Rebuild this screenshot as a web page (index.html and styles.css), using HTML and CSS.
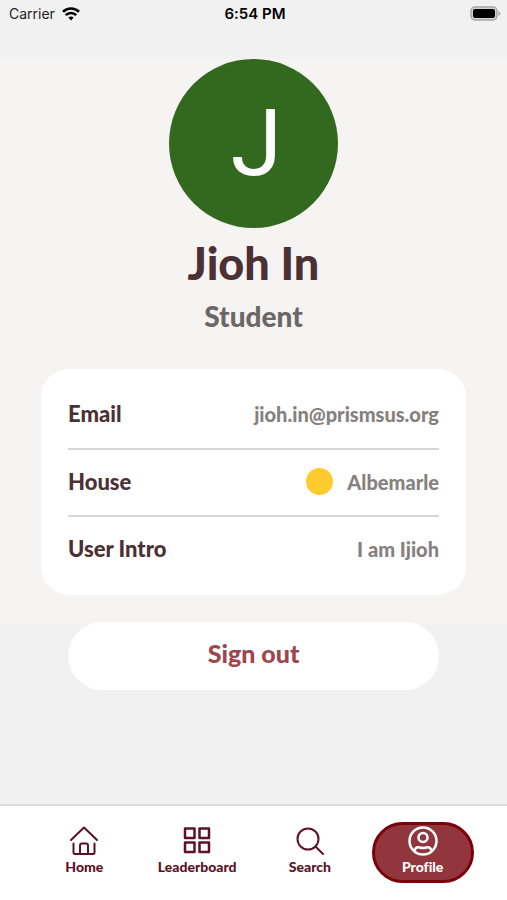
FILE: index.html
```html
<!DOCTYPE html>
<html lang="en">
<head>
    <meta charset="UTF-8">
    <meta name="viewport" content="width=device-width, initial-scale=1.0">
    <title>Profile</title>
    <link rel="stylesheet" href="styles.css">
</head>
<body>
    <!-- STATUS BAR -->
    <header class="status-bar">
        <div class="carrier">
            <span>Carrier</span>
            <svg width="18" height="14" viewBox="0 0 18 14" fill="none" stroke="#000" stroke-width="2.6">
                <path d="M1 4.700a11.500 11.500 0 0 1 16 0"/>
                <path d="M3.800 8.200a7.400 7.400 0 0 1 10.400 0"/>
                <path d="M9 13.500l-2.600-3a4 4 0 0 1 5.200 0z" fill="#000" stroke="none"/>
            </svg>
        </div>
        <time class="clock">6:54 PM</time>
        <svg class="battery" width="31" height="15" viewBox="0 0 31 15">
            <rect x="1" y="1" width="26" height="13" rx="4" fill="#d4d4d4" stroke="#a6a6a6" stroke-width="1.5"/>
            <rect x="3" y="3" width="22" height="9" rx="2" fill="#000"/>
            <path d="M28.5 5v5q2-1 2-2.500t-2-2.500z" fill="#a6a6a6"/>
        </svg>
    </header>

    <main>
        <section class="profile">
            <div class="avatar">J</div>
            <h1>Jioh In</h1>
            <p class="role">Student</p>

            <dl class="card">
                <div class="row">
                    <dt>Email</dt>
                    <dd>jioh.in@prismsus.org</dd>
                </div>
                <div class="row">
                    <dt>House</dt>
                    <dd><span class="house-color"></span>Albemarle</dd>
                </div>
                <div class="row">
                    <dt>User Intro</dt>
                    <dd>I am Ijioh</dd>
                </div>
            </dl>
        </section>
        <button type="button" class="sign-out">Sign out</button>
    </main>

    <!-- BOTTOM NAVIGATION -->
    <nav class="tabs">
        <a href="#home" class="tab">
            <svg width="30" height="30" viewBox="0 0 30 30">
                <path d="M2 14L15 1.500l13 12.500M4.500 17.500v9q0 1.500 1.500 1.500h18q1.500 0 1.500-1.500v-9M11 28v-8.500q0-2 2-2h4q2 0 2 2v8.500"/>
            </svg>
            <span>Home</span>
        </a>
        <a href="#leaderboard" class="tab">
            <svg width="30" height="30" viewBox="0 0 30 30" class="thick">
                <rect x="3" y="2.500" width="9.500" height="9.500"/>
                <rect x="17.500" y="2.500" width="9.500" height="9.500"/>
                <rect x="3" y="16.500" width="9.500" height="9.500"/>
                <rect x="17.500" y="16.500" width="9.500" height="9.500"/>
            </svg>
            <span>Leaderboard</span>
        </a>
        <a href="#search" class="tab">
            <svg width="30" height="30" viewBox="0 0 30 30">
                <circle cx="13" cy="13" r="10.500"/>
                <path d="M20.500 20.500l7.500 7.500"/>
            </svg>
            <span>Search</span>
        </a>
        <a href="#profile" class="tab active">
            <svg width="30" height="30" viewBox="0 0 30 30" class="thick">
                <circle cx="15" cy="15" r="13.500"/>
                <circle cx="15" cy="11.500" r="4.500"/>
                <path d="M6.500 24.500c1-3 3-3.500 5-3 2.500.7 4.500.7 7 0 2-.5 4 0 5 3"/>
            </svg>
            <span>Profile</span>
        </a>
    </nav>
</body>
</html>
```
FILE: styles.css
```css
* { margin: 0; padding: 0; box-sizing: border-box; }
body {
    font-family: Lato, sans-serif;
    font-weight: 900;
    font-variant-ligatures: none;
    background: #f1f1f1;
    color: #4b3034;
    min-height: 100vh;
    display: flex;
    flex-direction: column;
}
.status-bar {
    display: grid;
    grid-template-columns: 1fr auto 1fr;
    align-items: center;
    height: 59px;
    padding: 0 6px 32px 9px;
    font-family: Inter, sans-serif;
    font-size: 14px;
    font-weight: 400;
    color: #222;
}
.carrier { display: flex; align-items: center; gap: 7px; }
.clock { font-size: 15px; font-weight: 600; color: #000; }
.battery { justify-self: end; }
.profile {
    display: flex;
    flex-direction: column;
    align-items: center;
    padding: 0 41px 29px;
    background: #f5f4f2;
}
.avatar {
    width: 169px;
    height: 169px;
    padding-left: 6px;
    border-radius: 50%;
    background: #33691e;
    color: #fff;
    font: 400 93px/170px Roboto, sans-serif;
    text-align: center;
}
h1 { font-size: 45px; line-height: 70px; font-weight: 900; }
.role { font-size: 28px; line-height: 36px; color: #6b6766; }
.card {
    width: 100%;
    margin-top: 35px;
    padding: 12px 27px 13px;
    border-radius: 28px;
    background: #fff;
}
.row {
    display: flex;
    justify-content: space-between;
    align-items: center;
    height: 67px;
    padding-bottom: 2px;
}
.row + .row { border-top: 2px solid #d6d6d6; }
dt { font-size: 22px; }
dd {
    display: flex;
    align-items: center;
    gap: 14px;
    font-size: 20px;
    color: #858180;
}
.house-color { width: 27px; height: 27px; border-radius: 50%; background: #ffcb2f; }
.sign-out {
    display: block;
    width: calc(100% - 136px);
    height: 68px;
    margin: -2px auto 0;
    padding-bottom: 6px;
    border: none;
    border-radius: 34px;
    background: #fff;
    color: #9c464d;
    font: 900 25px Lato, sans-serif;
    cursor: pointer;
}
.tabs {
    display: grid;
    grid-template-columns: repeat(4, 1fr);
    justify-items: center;
    height: 96px;
    margin-top: auto;
    padding: 16px 28px 0;
    border-top: 2px solid #dcdcdc;
    background: #fff;
}
.tab {
    display: flex;
    flex-direction: column;
    align-items: center;
    gap: 2px;
    width: 102px;
    height: 61px;
    padding-top: 1px;
    border: 3px solid transparent;
    border-radius: 31px;
    color: #5d1229;
    font-size: 14px;
    line-height: 18px;
    text-decoration: none;
}
.tab svg { fill: none; stroke: currentColor; stroke-width: 2; stroke-linecap: round; stroke-linejoin: round; }
.tab svg.thick { stroke-width: 2.5; }
.tab.active { border-color: #7b0009; background: #92363d; color: #fff; }
```
